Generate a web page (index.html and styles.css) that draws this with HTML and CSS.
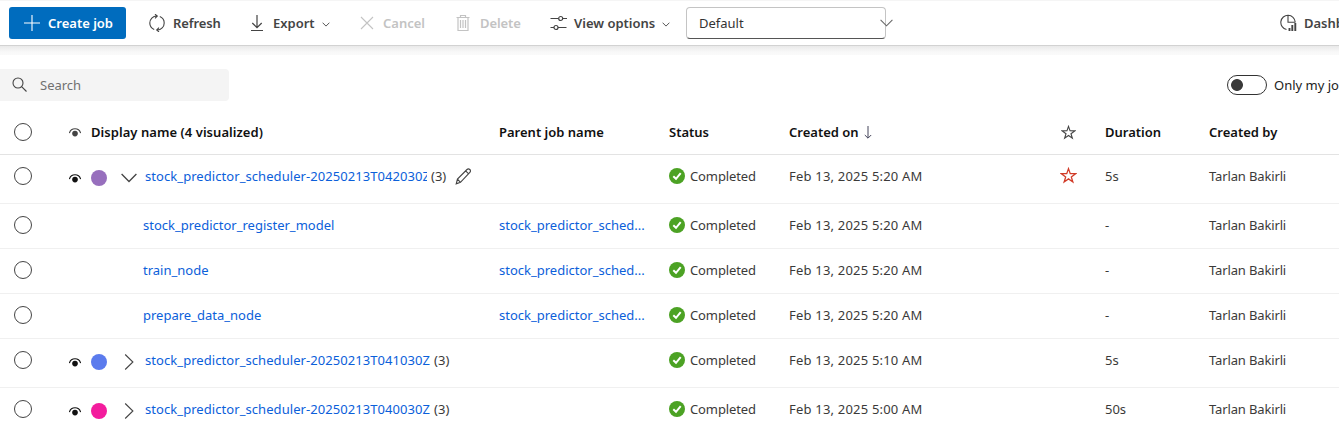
FILE: index.html
```
<!DOCTYPE html>
<html lang="en">
<head>
<meta charset="utf-8">
<title>Jobs</title>
<link rel="stylesheet" href="styles.css">
</head>
<body>
<svg width="0" height="0" class="defs" aria-hidden="true">
  <symbol id="eye" viewBox="0 0 12 9"><path d="M.4 5C1.200 2.300 3.300.800 6 .800S10.800 2.300 11.600 5" fill="none" stroke="currentColor" stroke-width="1.100"/><circle cx="6" cy="5.600" r="2.800" fill="currentColor"/></symbol>
  <symbol id="check" viewBox="0 0 16 16"><circle cx="8" cy="8" r="8" fill="#4ca224"/><path d="M4.300 8.200l2.700 2.600 4.700-5.600" fill="none" stroke="#fff" stroke-width="2"/></symbol>
  <symbol id="right" viewBox="0 0 10 16"><path d="M1.200.500l7.700 7.500-7.700 7.500" fill="none" stroke="currentColor" stroke-width="1.100"/></symbol>
  <symbol id="down" viewBox="0 0 16 10"><path d="M.6 1l7.400 7.500L15.400 1" fill="none" stroke="currentColor" stroke-width="1.300"/></symbol>
  <symbol id="caret" viewBox="0 0 8 5"><path d="M.6.700L4 4.100 7.400.700" fill="none" stroke="currentColor" stroke-width=".9"/></symbol>
  <symbol id="star" viewBox="0 0 16 16"><path d="M8 1.500l1.650 4.700 5 .1-4 3 1.450 4.800L8 11.200l-4.100 2.900 1.450-4.800-4-3 5-.1z" fill="none" stroke="currentColor" stroke-width="1.200"/></symbol>
</svg>

<header class="toolbar">
  <button class="primary">
    <svg width="16" height="16" viewBox="0 0 16 16"><path d="M8 0v16M0 8h16" stroke="#fff" stroke-width="1.100"/></svg>
    <span>Create job</span>
  </button>
  <button class="tool refresh">
    <svg width="16" height="18" viewBox="0 0 16 18" fill="none" stroke="currentColor" stroke-width="1.100"><path d="M5.200 15.400C2.500 14.300.8 12 .8 9c0-3.900 3-7 7-7M6 .2L8.300 2 6 4.300M10.800 2.600C13.500 3.700 15.200 6 15.200 9c0 3.900-3 7-7 7M10 13.700L7.700 16l2.300 1.900"/></svg>
    <span>Refresh</span>
  </button>
  <button class="tool export">
    <svg width="14" height="18" viewBox="0 0 14 18" fill="none" stroke="currentColor" stroke-width="1.200"><path d="M7 1v12.500M2.300 9L7 13.700 11.700 9M1 16.500h12"/></svg>
    <span>Export</span>
    <svg class="caret" width="8" height="5"><use href="#caret"/></svg>
  </button>
  <button class="tool cancel disabled">
    <svg width="14" height="14" viewBox="0 0 14 14" stroke="currentColor" stroke-width="1.100"><path d="M1 1l12 12M13 1L1 13"/></svg>
    <span>Cancel</span>
  </button>
  <button class="tool delete disabled">
    <svg width="14" height="18" viewBox="0 0 14 18" fill="none" stroke="currentColor" stroke-width="1.200"><path d="M.5 3.500h13M4.500 3.500v-2h5v2M2 3.500v13h10v-13M4.500 6v8M7 6v8M9.500 6v8"/></svg>
    <span>Delete</span>
  </button>
  <button class="tool view">
    <svg width="17" height="16" viewBox="0 0 17 16" fill="none" stroke="currentColor" stroke-width="1.200"><path d="M.5 3.500h8M13 3.500h4M.5 12.500H4M8 12.500h8.500"/><circle cx="10.700" cy="3.500" r="2"/><circle cx="6" cy="12.500" r="2"/></svg>
    <span>View options</span>
    <svg class="caret" width="8" height="5"><use href="#caret"/></svg>
  </button>
  <div class="select"><span>Default</span><svg width="13" height="8" viewBox="0 0 16 10"><use href="#down"/></svg></div>
  <button class="tool dashboard">
    <svg width="17" height="18" viewBox="0 0 17 18" fill="none" stroke="currentColor" stroke-width="1.100"><path d="M6.500 15.500A7.200 7.200 0 1 1 15.200 8M8 1.200V8.300h7.500"/><path d="M9.500 17v-3M12.300 17v-6M15.300 17V9" stroke-width="1.900"/></svg>
    <span>Dashboard view</span>
  </button>
</header>
<div class="shade"></div>

<section class="filters">
  <div class="search">
    <svg width="15" height="15" viewBox="0 0 15 15" fill="none" stroke="currentColor" stroke-width="1.100"><circle cx="6" cy="6" r="5"/><path d="M9.600 9.600l4.900 4.900"/></svg>
    <span>Search</span>
  </div>
  <div class="mine"><i class="toggle"></i><span>Only my jobs</span></div>
</section>

<main class="table">
  <div class="row head">
    <i class="radio"></i>
    <div class="name"><svg class="eye"><use href="#eye"/></svg><b class="title">Display name (4 visualized)</b></div>
    <b class="parent-title">Parent job name</b><b class="status-title">Status</b>
    <div class="sort"><b>Created on</b><svg width="8" height="13" viewBox="0 0 8 13"><path d="M4 0v12M.8 9L4 12.200 7.200 9" fill="none" stroke="#44445a"/></svg></div>
    <svg class="star"><use href="#star"/></svg>
    <b class="duration-title">Duration</b><b class="by-title">Created by</b>
  </div>
  <div class="row tall">
    <i class="radio"></i>
    <div class="name"><svg class="eye"><use href="#eye"/></svg><i class="dot purple"></i><svg class="chev open"><use href="#down"/></svg><a class="long clip">stock_predictor_scheduler-20250213T042030Z</a><span class="count">(3)</span>
      <svg class="pencil" viewBox="0 0 18 18" fill="none" stroke="currentColor" stroke-width="1.200"><path d="M1.300 16.700l1.300-5L12.700 1.600c.9-.9 2.200-.9 3 0 .9.900.9 2.100 0 3L5.800 15.200zM11.300 3l3.400 3.400M2.600 11.700l3.200 3.500"/></svg></div>
    <span></span><div class="status"><svg><use href="#check"/></svg><span>Completed</span></div>
    <span class="date">Feb 13, 2025 5:20 AM</span><svg class="star red"><use href="#star"/></svg><span>5s</span><span class="by">Tarlan Bakirli</span>
  </div>
  <div class="row">
    <i class="radio"></i><div class="name"><a class="child">stock_predictor_register_model</a></div>
    <a class="parent">stock_predictor_sched...</a><div class="status"><svg><use href="#check"/></svg><span>Completed</span></div>
    <span class="date">Feb 13, 2025 5:20 AM</span><span></span><span>-</span><span class="by">Tarlan Bakirli</span>
  </div>
  <div class="row">
    <i class="radio"></i><div class="name"><a class="child">train_node</a></div>
    <a class="parent">stock_predictor_sched...</a><div class="status"><svg><use href="#check"/></svg><span>Completed</span></div>
    <span class="date">Feb 13, 2025 5:20 AM</span><span></span><span>-</span><span class="by">Tarlan Bakirli</span>
  </div>
  <div class="row">
    <i class="radio"></i><div class="name"><a class="child">prepare_data_node</a></div>
    <a class="parent">stock_predictor_sched...</a><div class="status"><svg><use href="#check"/></svg><span>Completed</span></div>
    <span class="date">Feb 13, 2025 5:20 AM</span><span></span><span>-</span><span class="by">Tarlan Bakirli</span>
  </div>
  <div class="row tall">
    <i class="radio"></i>
    <div class="name"><svg class="eye"><use href="#eye"/></svg><i class="dot blue"></i><svg class="chev"><use href="#right"/></svg><a class="long">stock_predictor_scheduler-20250213T041030Z</a><span class="count">(3)</span></div>
    <span></span><div class="status"><svg><use href="#check"/></svg><span>Completed</span></div>
    <span class="date">Feb 13, 2025 5:10 AM</span><span></span><span>5s</span><span class="by">Tarlan Bakirli</span>
  </div>
  <div class="row tall">
    <i class="radio"></i>
    <div class="name"><svg class="eye"><use href="#eye"/></svg><i class="dot pink"></i><svg class="chev"><use href="#right"/></svg><a class="long">stock_predictor_scheduler-20250213T040030Z</a><span class="count">(3)</span></div>
    <span></span><div class="status"><svg><use href="#check"/></svg><span>Completed</span></div>
    <span class="date">Feb 13, 2025 5:00 AM</span><span></span><span>50s</span><span class="by">Tarlan Bakirli</span>
  </div>
</main>
</body>
</html>
```
FILE: styles.css
```
* { box-sizing: border-box; }
html, body { height: 434px; overflow: hidden; }
body { margin: 0; background: #fff; color: #3b3a39; font: 13px/20px "Noto Sans", "Open Sans", sans-serif; }
.defs { display: none; }
svg { flex: none; }
span, a, b { white-space: nowrap; }
b { font-weight: 600; color: #111; }
a { color: #0b60da; }

.toolbar { display: flex; align-items: center; height: 46px; padding-left: 9px; border-top: 1px solid #f5f5f5; border-bottom: 1px solid #d2d2d2; overflow: hidden; }
button { display: flex; align-items: center; flex: none; height: 32px; padding: 0; border: 0; background: none; font: inherit; font-weight: 600; color: #444; }
.primary { width: 117px; padding-left: 15px; gap: 8px; border-radius: 3px; background: #006cbe; color: #fff; }
.refresh { width: 101px; margin-left: 23px; gap: 8px; letter-spacing: -.1px; }
.export { width: 110px; gap: 9px; }
.cancel { width: 96px; gap: 9px; }
.delete { width: 94px; gap: 10px; letter-spacing: -.1px; }
.view { width: 136px; gap: 7px; }
.disabled { color: #c3c3c3; }
.tool .caret { margin-left: -2px; margin-top: 2px; }
.view .caret { margin-left: 0; }
.select { display: flex; flex: none; align-items: center; justify-content: space-between; width: 200px; height: 32px; padding-left: 12px; border: 1px solid #c4c4c4; border-bottom-color: #555; border-radius: 4px; color: #333; }
.select svg { margin-right: -8px; color: #666; }
.dashboard { margin-left: 394px; gap: 7px; }
.shade { height: 9px; background: linear-gradient(#e9e9e9, #f8f8f8 6px, #fafafa); }

.filters { display: flex; justify-content: space-between; height: 55px; padding-top: 14px; overflow: hidden; }
.search { display: flex; align-items: center; width: 229px; height: 32px; padding-left: 12px; gap: 13px; border-radius: 0 4px 4px 0; background: #f4f4f4; color: #707070; }
.search svg { color: #444; margin-top: -2px; }
.mine { display: flex; align-items: center; width: 112px; height: 32px; gap: 7px; color: #222; }
.toggle { flex: none; width: 40px; height: 20px; border: 1px solid #333; border-radius: 10px; background: radial-gradient(circle at 9px 9px, #3a3a3a 5.500px, #fff 6.300px); }

.row { display: grid; grid-template-columns: 69px 430px 170px 120px 262px 54px 104px 130px; height: 45px; padding-top: 11px; align-items: start; border-bottom: 1px solid #f0f0f0; }
.row.tall { height: 49px; }
.head { padding-top: 12px; border-bottom-color: #e3e3e3; }
.radio { width: 18px; height: 18px; margin: 1px 0 0 14px; border: 1.400px solid #444; border-radius: 50%; }
.name, .status, .sort { display: flex; align-items: center; height: 20px; }
.eye { width: 12px; height: 9px; color: #111; margin-top: 5px; }
.head .eye { margin-top: 0; color: #444; }
.title { margin-left: 10px; letter-spacing: .05px; }
.dot { flex: none; width: 16px; height: 16px; margin: 4px 14px 0 10px; border-radius: 50%; }
.purple { background: #976fbd; }
.blue { background: #5b7bed; }
.pink { background: #f31c9d; }
.chev { width: 10px; height: 16px; margin: 4px 11px 0 3px; color: #444; }
.chev.open { width: 16px; height: 10px; margin: 4px 8px 0 0; }
.long { letter-spacing: .065px; }
.clip { width: 282px; overflow: hidden; }
.count { margin-left: 4px; }
.pencil { width: 17px; height: 17px; margin-left: 9px; color: #444; }
.child { margin-left: 74px; }
.status { gap: 5px; letter-spacing: -.12px; }
.status svg { width: 16px; height: 16px; }
.date { letter-spacing: .2px; }
.by { letter-spacing: -.14px; }
.sort { gap: 5px; }
.star { width: 15px; height: 15px; margin: 3px 0 0 10px; color: #444; }
.star.red { width: 17px; height: 17px; margin: 1px 0 0 9px; color: #d13b28; }
```
